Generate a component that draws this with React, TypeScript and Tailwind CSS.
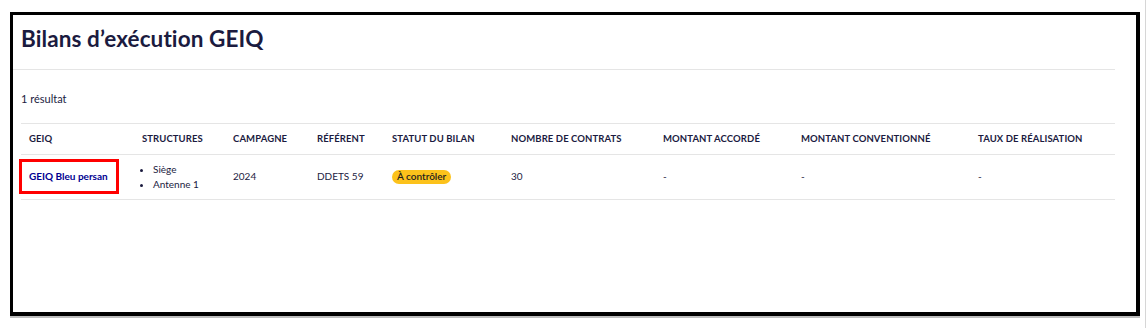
import React from "react";

type Col = { label: string; width: string };

const columns: Col[] = [
  { label: "GEIQ", width: "w-[113px]" },
  { label: "Structures", width: "w-[91px]" },
  { label: "Campagne", width: "w-[84px]" },
  { label: "Référent", width: "w-[75px]" },
  { label: "Statut du bilan", width: "w-[119px]" },
  { label: "Nombre de contrats", width: "w-[152px]" },
  { label: "Montant accordé", width: "w-[138px]" },
  { label: "Montant conventionné", width: "w-[177px]" },
  { label: "Taux de réalisation", width: "w-[145px]" },
];

export default function App() {
  return (
    <div
      className="flex h-[328px] w-[1147px] bg-white text-[#1b1b3f]"
      style={{ fontFamily: "Lato, 'Noto Sans', sans-serif" }}
    >
      <div className="pl-[10px] pt-[12px]">
        <div className="h-[304px] w-[1130px] border-[3px] border-b-4 border-r-4 border-black shadow-[0_2px_0_#bdbdbd]">
          <div className="pl-[8px] pt-[9px]">
            <h1 className="text-[22.5px] font-bold leading-[30px] tracking-[0.1px]">
              Bilans d’exécution GEIQ
            </h1>
          </div>
          <div className="mr-[21px] mt-[15px] border-t border-[#e5e5e5]" />
          <div className="pl-[8px] pt-[21px]">
            <p className="text-[11px] leading-[16px]">1 résultat</p>
          </div>
          <div className="ml-[8px] mr-[21px] mt-[16px]">
            <table className="w-full table-fixed border-collapse text-left">
              <colgroup>
                {columns.map((c) => (
                  <col key={c.label} className={c.width} />
                ))}
              </colgroup>
              <thead>
                <tr className="h-[31px] border-y border-[#e5e5e5]">
                  {columns.map((c) => (
                    <th
                      key={c.label}
                      className="px-[8px] text-[9.5px] font-bold uppercase tracking-[0.1px]"
                    >
                      {c.label}
                    </th>
                  ))}
                </tr>
              </thead>
              <tbody>
                <tr className="h-[45px] border-b border-[#e5e5e5] text-[10px]">
                  <td className="relative px-[8px] pb-[1px]">
                    <span className="absolute left-[-2px] top-[4px] h-[35px] w-[100px] border-[3px] border-[#ff0000]" />
                    <a className="font-bold text-[#000091]">GEIQ Bleu persan</a>
                  </td>
                  <td className="px-[8px]">
                    <ul className="list-disc pl-[11px] leading-[15px]">
                      <li>Siège</li>
                      <li>Antenne 1</li>
                    </ul>
                  </td>
                  <td className="px-[8px] pb-[1px]">2024</td>
                  <td className="px-[8px] pb-[1px]">DDETS 59</td>
                  <td className="px-[8px] pb-[1px]">
                    <span className="inline-flex h-[14px] items-center rounded-full bg-[#fcc21b] px-[5px] text-[10px] font-semibold text-[#1e1e1e]">
                      À contrôler
                    </span>
                  </td>
                  <td className="px-[8px] pb-[1px]">30</td>
                  <td className="px-[8px] pb-[1px]">-</td>
                  <td className="px-[8px] pb-[1px]">-</td>
                  <td className="px-[8px] pb-[1px]">-</td>
                </tr>
              </tbody>
            </table>
          </div>
        </div>
      </div>
      <div className="ml-[5px] h-full border-l border-[#d6d6d6]" />
    </div>
  );
}
